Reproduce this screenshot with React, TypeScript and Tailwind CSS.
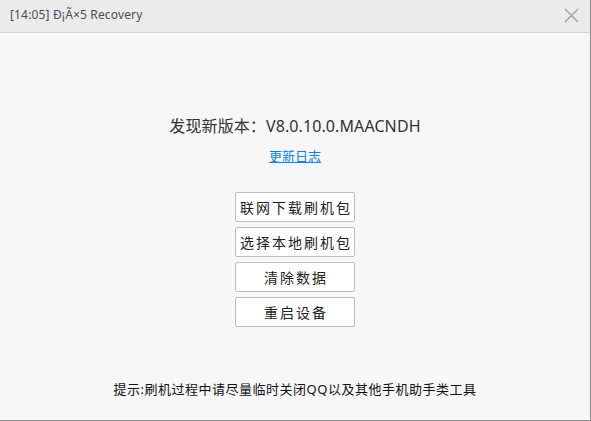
import React from 'react';

const buttons = ['联网下载刷机包', '选择本地刷机包', '清除数据', '重启设备'];

export default function App() {
  return (
    <div
      className="w-[591px] h-[421px] flex flex-col bg-[#f7f7f7] border-r border-b border-[#8a8a8a] overflow-hidden"
      style={{ fontFamily: '"Noto Sans", "Noto Sans CJK SC", sans-serif' }}
    >
      {/* title bar */}
      <div className="h-[33px] shrink-0 flex items-center justify-between bg-[#ebebeb] border-b border-[#d6d6d6] pl-[10px] pr-[11px]">
        <span className="text-[12px] tracking-[0.15px] text-[#4a4a5a] pb-[2px]">[14:05] Ð¡Ã×5 Recovery</span>
        <svg width="15" height="15" viewBox="0 0 15 15" className="mb-[2px]">
          <path d="M1 1L14 14M14 1L1 14" stroke="#a0a0a0" strokeWidth="1.4" />
        </svg>
      </div>

      <div className="flex flex-col items-center pt-[81px]">
        <div className="text-[16px] leading-[24px] tracking-[0.1px] text-[#333]">发现新版本：V8.0.10.0.MAACNDH</div>
        <a className="mt-[8px] text-[13px] leading-[20px] text-[#0a84e0] underline">更新日志</a>

        <div className="mt-[26px] flex flex-col gap-[5px]">
          {buttons.map((b) => (
            <button
              key={b}
              className="w-[120px] h-[30px] bg-white border border-[#bdbdbd] rounded-[2px] text-[14px] tracking-[2px] pl-[2px] text-[#222] flex items-center justify-center"
            >
              {b}
            </button>
          ))}
        </div>

        <div className="mt-[52px] text-[13px] leading-[20px] tracking-[0.5px] text-[#111]">提示:刷机过程中请尽量临时关闭QQ以及其他手机助手类工具</div>
      </div>
    </div>
  );
}
